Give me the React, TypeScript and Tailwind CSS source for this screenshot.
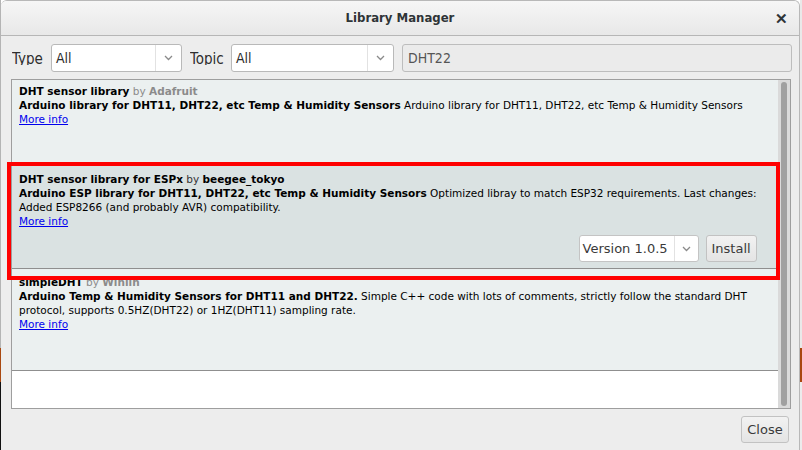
import React from 'react'

const listFont = { fontFamily: '"DejaVu Sans", sans-serif' }
const uiFont = { fontFamily: '"DejaVu Sans Condensed", "DejaVu Sans", sans-serif' }

function Chevron() {
  return (
    <svg width="9" height="6" viewBox="0 0 9 6" className="text-[#8a8a8a]">
      <polyline points="1,1 4.5,4.5 8,1" fill="none" stroke="currentColor" strokeWidth="1.3" />
    </svg>
  )
}

function Select({ value, width, arrow }: { value: string; width: string; arrow: string }) {
  return (
    <div className={`flex h-[28px] items-stretch rounded-[3px] border border-[#b9b9b9] bg-white ${width}`}>
      <div className="flex flex-1 items-center pl-[4px] text-[14px] text-[#2e2e2e]">{value}</div>
      <div className={`flex items-center justify-center border-l border-[#e2e2e2] ${arrow}`}>
        <Chevron />
      </div>
    </div>
  )
}

function MoreInfo() {
  return <div className="text-[#0000ee] underline">More info</div>
}

export default function App() {
  return (
    <div className="flex h-[450px] w-[802px] overflow-hidden bg-white">
      <div className="flex w-px flex-col">
        <div className="h-[348px] bg-[#b4b4b4]" />
        <div className="h-[34px] bg-[#a9470f]" />
        <div className="flex-1 bg-[#111]" />
      </div>

      <div className="flex w-[799px] flex-col overflow-hidden rounded-t-[6px] border-r border-t border-[#b8b8b8] bg-[#ededed]">
        {/* title bar */}
        <div className="flex h-[35px] shrink-0 items-center border-b border-[#b6b6b6] bg-gradient-to-b from-[#f6f6f6] to-[#e8e8e8]">
          <div className="w-[36px]" />
          <div className="flex-1 text-center text-[13px] font-bold text-[#2e3436]" style={uiFont}>
            Library Manager
          </div>
          <div className="flex w-[36px] items-center justify-center text-[15px] font-bold text-[#2e3436]">✕</div>
        </div>

        {/* filter row */}
        <div className="mt-[8px] flex items-center pl-[11px]" style={uiFont}>
          <span className="h-[14px] w-[39px] overflow-hidden text-[15px] leading-[16px] text-[#2e2e2e]">Type</span>
          <Select value="All" width="w-[131px]" arrow="w-[26px]" />
          <span className="ml-[8px] h-[14px] w-[41px] overflow-hidden text-[15px] leading-[16px] text-[#2e2e2e]">
            Topic
          </span>
          <Select value="All" width="w-[163px]" arrow="w-[26px]" />
          <div className="ml-[8px] flex h-[28px] w-[390px] items-center rounded-[3px] border border-[#bdbdbd] bg-[#ebebeb] pl-[5px] text-[14px] text-[#555]">
            DHT22
          </div>
        </div>

        {/* library list */}
        <div className="ml-[10px] mt-[7px] flex h-[330px] w-[780px] border border-[#9e9e9e]">
          <div
            className="flex flex-1 flex-col whitespace-nowrap bg-white text-[10.5px] leading-[14px] text-black"
            style={listFont}
          >
            <div className="h-[84px] border-b border-[#a0a0a0] bg-[#ebf0f0] pl-[7px] pt-[4px]">
              <div>
                <b>DHT sensor library</b> <span className="text-[#8b8b8b]">by</span>{' '}
                <b className="text-[#8b8b8b]">Adafruit</b>
              </div>
              <div>
                <b>Arduino library for DHT11, DHT22, etc Temp &amp; Humidity Sensors</b> Arduino library for DHT11,
                DHT22, etc Temp &amp; Humidity Sensors
              </div>
              <MoreInfo />
            </div>

            <div className="flex h-[105px] flex-col border-b border-[#8f8f8f] bg-[#dae2e2] pl-[7px] pr-[21px] pt-[8px]">
              <div>
                <b>DHT sensor library for ESPx</b> <span className="text-[#333]">by</span> <b>beegee_tokyo</b>
              </div>
              <div>
                <b>Arduino ESP library for DHT11, DHT22, etc Temp &amp; Humidity Sensors</b> Optimized libray to match
                ESP32 requirements. Last changes:
              </div>
              <div>Added ESP8266 (and probably AVR) compatibility.</div>
              <MoreInfo />
              <div className="mt-[7px] flex justify-end gap-[7px] text-[13px] leading-none">
                <div className="flex h-[27px] w-[120px] items-stretch rounded-[3px] border border-[#c4c4c4] bg-white">
                  <div className="flex flex-1 items-center pl-[3px] text-[#3a3a3a]">Version 1.0.5</div>
                  <div className="flex w-[24px] items-center justify-center border-l border-[#e2e2e2]">
                    <Chevron />
                  </div>
                </div>
                <div className="flex h-[27px] w-[51px] items-center justify-center rounded-[3px] border border-[#c2c2c2] bg-gradient-to-b from-[#f2f2f2] to-[#e4e4e4] text-[#3a3a3a]">
                  Install
                </div>
              </div>
            </div>

            <div className="h-[102px] border-b border-[#8f8f8f] bg-[#ebf0f0] pl-[7px] pt-[6px]">
              <div>
                <b>simpleDHT</b> <span className="text-[#8b8b8b]">by</span> <b className="text-[#8b8b8b]">Winlin</b>
              </div>
              <div>
                <b>Arduino Temp &amp; Humidity Sensors for DHT11 and DHT22.</b> Simple C++ code with lots of comments,
                strictly follow the standard DHT
              </div>
              <div>protocol, supports 0.5HZ(DHT22) or 1HZ(DHT11) sampling rate.</div>
              <MoreInfo />
            </div>
          </div>

          <div className="flex w-[13px] justify-center bg-[#dadada] pb-[2px] pt-[2px]">
            <div className="w-[6px] rounded-full bg-[#a0a0a0]" />
          </div>
        </div>

        {/* footer */}
        <div className="mt-[7px] flex justify-end pr-[10px]">
          <div
            className="flex h-[27px] w-[48px] items-center justify-center rounded-[3px] border border-[#c2c2c2] bg-gradient-to-b from-[#f2f2f2] to-[#e4e4e4] text-[13px] text-[#3a3a3a]"
            style={listFont}
          >
            Close
          </div>
        </div>
      </div>

      <div className="flex w-[2px] flex-col">
        <div className="h-[348px] bg-[#e9e9e9]" />
        <div className="h-[34px] bg-[#a9470f]" />
        <div className="flex-1 bg-[#ececec]" />
      </div>

      {/* highlight annotation */}
      <div className="pointer-events-none absolute left-[7px] top-[162px] h-[118px] w-[773px] border-4 border-[#ff0000]" />
    </div>
  )
}
